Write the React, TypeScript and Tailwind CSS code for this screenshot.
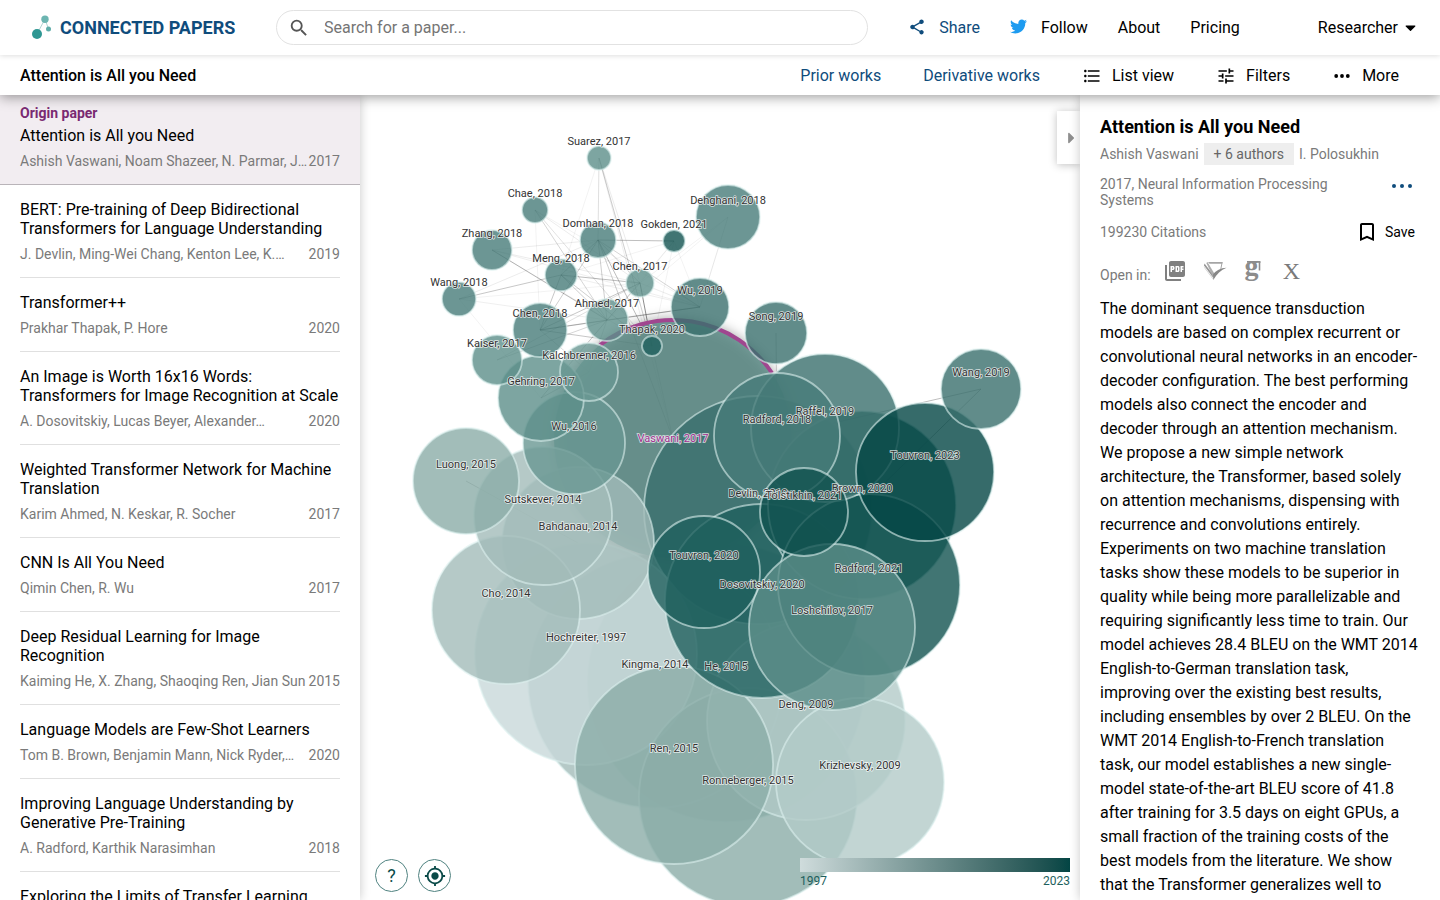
import React from "react";
import {
  MdShare,
  MdFormatListBulleted,
  MdTune,
  MdBookmarkBorder,
  MdPictureAsPdf,
  MdSearch,
  MdMyLocation,
} from "react-icons/md";
import { FaTwitter, FaCaretDown, FaCaretRight } from "react-icons/fa";

type Paper = { title: string; authors: string; year: number };

const papers: Paper[] = [
  {
    title: "BERT: Pre-training of Deep Bidirectional Transformers for Language Understanding",
    authors: "J. Devlin, Ming-Wei Chang, Kenton Lee, K.…",
    year: 2019,
  },
  { title: "Transformer++", authors: "Prakhar Thapak, P. Hore", year: 2020 },
  {
    title: "An Image is Worth 16x16 Words: Transformers for Image Recognition at Scale",
    authors: "A. Dosovitskiy, Lucas Beyer, Alexander…",
    year: 2020,
  },
  {
    title: "Weighted Transformer Network for Machine Translation",
    authors: "Karim Ahmed, N. Keskar, R. Socher",
    year: 2017,
  },
  { title: "CNN Is All You Need", authors: "Qimin Chen, R. Wu", year: 2017 },
  {
    title: "Deep Residual Learning for Image Recognition",
    authors: "Kaiming He, X. Zhang, Shaoqing Ren, Jian Sun",
    year: 2015,
  },
  {
    title: "Language Models are Few-Shot Learners",
    authors: "Tom B. Brown, Benjamin Mann, Nick Ryder,…",
    year: 2020,
  },
  {
    title: "Improving Language Understanding by Generative Pre-Training",
    authors: "A. Radford, Karthik Narasimhan",
    year: 2018,
  },
  {
    title: "Exploring the Limits of Transfer Learning with a Unified Text-to-Text Transformer",
    authors: "Colin Raffel, Noam Shazeer, Adam Roberts,…",
    year: 2019,
  },
];

const yearFill: Record<number, string> = {
  1997: "#c8d8d9",
  2009: "#b3cac8",
  2014: "#a2bcb9",
  2015: "#8baca8",
  2016: "#699792",
  2017: "#5c8e8a",
  2018: "#477c79",
  2019: "#396f6d",
  2020: "#1f605e",
  2021: "#125350",
  2023: "#044645",
};

type GraphNode = { name: string; year: number; x: number; y: number; r: number };

const nodes: Record<string, GraphNode> = {
  he: { name: "He", year: 2015, x: 726, y: 683, r: 139 },
  kingma: { name: "Kingma", year: 2014, x: 655, y: 681, r: 127 },
  vaswani: { name: "Vaswani", year: 2017, x: 673, y: 439, r: 119 },
  devlin: { name: "Devlin", year: 2019, x: 758, y: 510, r: 114 },
  hochreiter: { name: "Hochreiter", year: 1997, x: 586, y: 654, r: 111 },
  ronneberger: { name: "Ronneberger", year: 2015, x: 748, y: 797, r: 109 },
  deng: { name: "Deng", year: 2009, x: 806, y: 721, r: 99 },
  ren: { name: "Ren", year: 2015, x: 674, y: 765, r: 99 },
  dosovitskiy: { name: "Dosovitskiy", year: 2020, x: 762, y: 601, r: 97 },
  brown: { name: "Brown", year: 2020, x: 862, y: 505, r: 94 },
  radford21: { name: "Radford", year: 2021, x: 869, y: 585, r: 91 },
  krizhevsky: { name: "Krizhevsky", year: 2009, x: 860, y: 782, r: 84 },
  loshchilov: { name: "Loshchilov", year: 2017, x: 832, y: 627, r: 83 },
  bahdanau: { name: "Bahdanau", year: 2014, x: 578, y: 543, r: 76 },
  raffel: { name: "Raffel", year: 2019, x: 825, y: 428, r: 74 },
  cho: { name: "Cho", year: 2014, x: 506, y: 610, r: 74 },
  touvron23: { name: "Touvron", year: 2023, x: 925, y: 472, r: 69 },
  sutskever: { name: "Sutskever", year: 2014, x: 543, y: 516, r: 69 },
  radford18: { name: "Radford", year: 2018, x: 777, y: 436, r: 63 },
  touvron20: { name: "Touvron", year: 2020, x: 704, y: 572, r: 56 },
  luong: { name: "Luong", year: 2015, x: 466, y: 481, r: 53 },
  wu16: { name: "Wu", year: 2016, x: 574, y: 443, r: 51 },
  tolstikhin: { name: "Tolstikhin", year: 2021, x: 804, y: 512, r: 44 },
  gehring: { name: "Gehring", year: 2017, x: 541, y: 398, r: 43 },
  wang19: { name: "Wang", year: 2019, x: 981, y: 389, r: 40 },
  dehghani: { name: "Dehghani", year: 2018, x: 728, y: 217, r: 32 },
  song: { name: "Song", year: 2019, x: 776, y: 333, r: 31 },
  kalchbrenner: { name: "Kalchbrenner", year: 2016, x: 589, y: 372, r: 29 },
  wu19: { name: "Wu", year: 2019, x: 700, y: 307, r: 29 },
  chen18: { name: "Chen", year: 2018, x: 540, y: 330, r: 27 },
  kaiser: { name: "Kaiser", year: 2017, x: 497, y: 360, r: 25 },
  ahmed: { name: "Ahmed", year: 2017, x: 607, y: 320, r: 21 },
  zhang: { name: "Zhang", year: 2018, x: 492, y: 250, r: 20 },
  domhan: { name: "Domhan", year: 2018, x: 598, y: 240, r: 18 },
  wang18: { name: "Wang", year: 2018, x: 459, y: 299, r: 17 },
  meng: { name: "Meng", year: 2018, x: 561, y: 275, r: 16 },
  chae: { name: "Chae", year: 2018, x: 535, y: 210, r: 13 },
  chen17: { name: "Chen", year: 2017, x: 640, y: 283, r: 14 },
  suarez: { name: "Suarez", year: 2017, x: 599, y: 158, r: 12 },
  gokden: { name: "Gokden", year: 2021, x: 674, y: 241, r: 11 },
  thapak: { name: "Thapak", year: 2020, x: 652, y: 346, r: 10 },
};

const links: [string, string, number][] = [
  ["suarez", "domhan", 0.2],
  ["suarez", "thapak", 0.3],
  ["suarez", "meng", 0.08],
  ["suarez", "chen17", 0.12],
  ["suarez", "vaswani", 0.1],
  ["chae", "ahmed", 0.25],
  ["chae", "chen17", 0.12],
  ["chae", "thapak", 0.18],
  ["chae", "chen18", 0.08],
  ["chae", "wu19", 0.08],
  ["zhang", "ahmed", 0.4],
  ["zhang", "domhan", 0.12],
  ["zhang", "chen17", 0.12],
  ["zhang", "thapak", 0.12],
  ["zhang", "wu19", 0.1],
  ["wang18", "meng", 0.35],
  ["wang18", "ahmed", 0.1],
  ["wang18", "domhan", 0.12],
  ["wang18", "gehring", 0.08],
  ["wang18", "chen17", 0.08],
  ["domhan", "gokden", 0.4],
  ["domhan", "chen18", 0.3],
  ["domhan", "ahmed", 0.3],
  ["domhan", "chen17", 0.25],
  ["domhan", "thapak", 0.4],
  ["domhan", "vaswani", 0.3],
  ["domhan", "wu19", 0.25],
  ["domhan", "meng", 0.3],
  ["meng", "chen17", 0.4],
  ["meng", "ahmed", 0.3],
  ["meng", "thapak", 0.3],
  ["meng", "chen18", 0.35],
  ["meng", "gokden", 0.08],
  ["meng", "wu19", 0.1],
  ["chen17", "thapak", 0.7],
  ["chen17", "ahmed", 0.35],
  ["chen17", "chen18", 0.35],
  ["chen17", "wu19", 0.12],
  ["chen17", "gokden", 0.1],
  ["chen17", "dehghani", 0.08],
  ["gokden", "ahmed", 0.06],
  ["gokden", "thapak", 0.08],
  ["gokden", "wu19", 0.08],
  ["dehghani", "wu19", 0.15],
  ["dehghani", "ahmed", 0.08],
  ["chen18", "ahmed", 0.3],
  ["chen18", "wu19", 0.35],
  ["chen18", "thapak", 0.35],
  ["chen18", "kalchbrenner", 0.2],
  ["kaiser", "ahmed", 0.25],
  ["kaiser", "chen17", 0.2],
  ["gehring", "ahmed", 0.35],
  ["gehring", "kalchbrenner", 0.3],
  ["ahmed", "wu19", 0.35],
  ["ahmed", "kalchbrenner", 0.2],
  ["thapak", "vaswani", 0.2],
  ["song", "radford18", 0.3],
  ["wang19", "brown", 0.4],
  ["wang19", "radford18", 0.4],
  ["luong", "bahdanau", 0.45],
];

function Graph() {
  const all = Object.entries(nodes);
  return (
    <svg
      role="img"
      aria-label="Graph of connected papers"
      viewBox="360 95 720 805"
      preserveAspectRatio="xMidYMid meet"
      className="block h-full w-full"
    >
      <defs>
        <filter id="origin-shadow" x="-20%" y="-20%" width="140%" height="140%">
          <feGaussianBlur stdDeviation="7" />
        </filter>
      </defs>
      <g stroke="#333333" strokeWidth="0.8">
        {links.map(([a, b, strength]) => (
          <line
            key={a + b}
            x1={nodes[a].x}
            y1={nodes[a].y}
            x2={nodes[b].x}
            y2={nodes[b].y}
            strokeOpacity={strength}
          />
        ))}
      </g>
      {all.map(([id, n]) => {
        const origin = id === "vaswani";
        return (
          <g key={id}>
            {origin && (
              <circle cx={n.x} cy={n.y} r={n.r} fill="#000000" fillOpacity="0.45" filter="url(#origin-shadow)" />
            )}
            <circle
              cx={n.x}
              cy={n.y}
              r={n.r}
              fill={yearFill[n.year]}
              fillOpacity="0.8"
              stroke="#dcf0ee"
              strokeOpacity={origin ? 0 : 0.6}
              strokeWidth="1.8"
            />
            {origin && <path d="M600 345A119 119 0 0 1 772 373" fill="none" stroke="#a0468f" strokeWidth="4" />}
          </g>
        );
      })}
      <g
        textAnchor="middle"
        stroke="#ffffff"
        strokeOpacity="0.75"
        strokeWidth="1.6"
        paintOrder="stroke"
        className="font-['Roboto',sans-serif] text-[11px]"
      >
        {all.map(([id, n]) => (
          <text
            key={id}
            x={n.x}
            y={id === "vaswani" ? n.y + 3 : n.y - 13}
            fill={id === "vaswani" ? "#a03090" : "#333333"}
          >
            {n.name}, {n.year}
          </text>
        ))}
      </g>
    </svg>
  );
}

function Logo() {
  return (
    <svg viewBox="0 0 20 26" className="h-[26px] w-5" aria-hidden="true">
      <path d="M5 19 13 4M13 4l3.5 10" stroke="#9cc9c7" strokeWidth="0.8" fill="none" />
      <circle cx="13" cy="4.2" r="3.7" fill="#6cb5b1" />
      <circle cx="16.5" cy="14" r="2.5" fill="#5fada9" />
      <circle cx="5" cy="19" r="5" fill="#2f9793" />
    </svg>
  );
}

function DotsIcon() {
  return (
    <svg viewBox="0 0 20 20" className="size-5" fill="currentColor" aria-hidden="true">
      <circle cx="4.2" cy="10" r="1.9" />
      <circle cx="10" cy="10" r="1.9" />
      <circle cx="15.8" cy="10" r="1.9" />
    </svg>
  );
}

function ScholarIcon() {
  return (
    <svg viewBox="0 0 24 20" className="h-5 w-6" aria-hidden="true">
      <path d="M5 1h15l-1 1.800H6.500z" fill="#a5a5a5" />
      <path d="M.5 5 9.500 17 10.500 19 1.500 7z" fill="#b5b5b5" />
      <path d="M1.500 2.500 10 13.500 10.300 17 1 4.500z" fill="#969696" />
      <path d="M4.500 1 11 12l-.5 4.500L3.300 2z" fill="#adadad" />
      <path d="M10 13.200C13 9.800 17.500 7 23.500 6.800 18 9 13.500 13.500 10.300 19z" fill="#888888" />
      <path d="m19 2-1.200 6" stroke="#a5a5a5" fill="none" />
    </svg>
  );
}

function GoogleScholarIcon() {
  return (
    <svg viewBox="0 0 18 22" className="h-[22px] w-[18px]" aria-hidden="true">
      <text
        x="8.5"
        y="15"
        textAnchor="middle"
        fill="#8c8c8c"
        className="font-['Liberation_Serif',serif] text-[28px] font-bold"
      >
        g
      </text>
      <path d="M4 1h13.500v1.800H4z" fill="#8c8c8c" />
      <path d="M16.500 2v8.500" stroke="#8c8c8c" strokeWidth="1.600" />
    </svg>
  );
}

const navLink = "flex items-center whitespace-nowrap";

export default function App() {
  return (
    <div className="flex h-screen flex-col overflow-hidden bg-white font-['Roboto',sans-serif] text-base text-black">
      <header className="relative z-30 flex h-[55px] shrink-0 items-center bg-white pr-[21px] pl-8 shadow-[0_1px_5px_rgba(0,0,0,0.13)]">
        <a href="#home" className="flex w-[244px] shrink-0 items-center gap-2 text-lg font-bold text-[#0f4c7c]">
          <Logo />
          CONNECTED PAPERS
        </a>
        <form className="flex h-[35px] min-w-0 flex-1 items-center rounded-full border border-[#e2e2e2] pl-[11px]">
          <MdSearch className="size-[22px] shrink-0 text-[#555555]" aria-hidden="true" />
          <input
            type="search"
            aria-label="Search for a paper"
            placeholder="Search for a paper..."
            className="ml-[14px] min-w-0 flex-1 rounded-full bg-transparent outline-none placeholder:text-[#757575]"
          />
        </form>
        <nav className="ml-10 flex shrink-0 items-center gap-[30px]" aria-label="Main">
          <a href="#share" className={`${navLink} gap-[13px] text-[#0f4c7c]`}>
            <MdShare className="mb-[2px] size-[18px]" aria-hidden="true" />
            Share
          </a>
          <a href="#follow" className={`${navLink} gap-[14px]`}>
            <FaTwitter className="mb-[2px] size-[17px] text-[#1d9bf0]" aria-hidden="true" />
            Follow
          </a>
          <a href="#about">About</a>
          <a href="#pricing">Pricing</a>
        </nav>
        <button type="button" className="ml-[78px] flex shrink-0 items-center gap-1">
          Researcher
          <FaCaretDown className="size-[17px]" aria-hidden="true" />
        </button>
      </header>

      <div className="relative z-20 flex h-10 shrink-0 items-center justify-between bg-white pt-[2px] pr-[41px] pl-5 shadow-[0_2px_12px_rgba(0,0,0,0.4)]">
        <h1 className="font-medium">Attention is All you Need</h1>
        <nav className="flex items-center gap-[42px]" aria-label="Graph tools">
          <a href="#prior" className="text-[#0f4c7c]">Prior works</a>
          <a href="#derivative" className="text-[#0f4c7c]">Derivative works</a>
          <button type="button" className="flex items-center gap-[10px]">
            <MdFormatListBulleted className="size-5" aria-hidden="true" />
            List view
          </button>
          <button type="button" className="flex items-center gap-[10px]">
            <MdTune className="size-5" aria-hidden="true" />
            Filters
          </button>
          <button type="button" className="flex items-center gap-[10px]">
            <DotsIcon />
            More
          </button>
        </nav>
      </div>

      <div className="flex min-h-0 flex-1">
        <aside className="z-10 w-[360px] shrink-0 overflow-hidden bg-white shadow-[0_0_10px_rgba(0,0,0,0.22)]">
          <a href="#origin" className="block border-b border-[#b9b4b9] bg-[#f2edf1] px-5 pt-[10px] pb-[15px]">
            <p className="text-sm leading-4 font-bold text-[#7a2a72]">Origin paper</p>
            <h2 className="mt-[5px] leading-[19px]">Attention is All you Need</h2>
            <p className="mt-2 flex justify-between text-sm leading-4 text-[#7a7a7a]">
              <span className="whitespace-nowrap">Ashish Vaswani, Noam Shazeer, N. Parmar, J…</span>
              <span>2017</span>
            </p>
          </a>
          <ul className="px-5">
            {papers.map((p) => (
              <li key={p.title} className="border-b border-[#e0e0e0] py-[15px]">
                <a href="#paper" className="block">
                  <h2 className="leading-[19px]">{p.title}</h2>
                  <p className="mt-2 flex justify-between text-sm leading-4 text-[#7a7a7a]">
                    <span className="whitespace-nowrap">{p.authors}</span>
                    <span>{p.year}</span>
                  </p>
                </a>
              </li>
            ))}
          </ul>
        </aside>

        <main className="relative min-w-0 flex-1">
          <Graph />
          <div className="absolute bottom-2 left-[15px] flex gap-[10px]">
            <button
              type="button"
              aria-label="Help"
              className="flex size-[33px] items-center justify-center rounded-full border border-[#4f8280] bg-white text-lg text-[#0a4a48]"
            >
              ?
            </button>
            <button
              type="button"
              aria-label="Center graph"
              className="flex size-[33px] items-center justify-center rounded-full border border-[#4f8280] bg-white text-[#0a4a48]"
            >
              <MdMyLocation className="size-[22px]" aria-hidden="true" />
            </button>
          </div>
          <div className="absolute right-[10px] bottom-3 w-[270px] text-xs leading-[14px] text-[#1d5f5d]">
            <div className="h-[14px] bg-linear-to-r from-[#cfdcdc] to-[#034544]" />
            <div className="mt-[2px] flex justify-between">
              <span>1997</span>
              <span>2023</span>
            </div>
          </div>
          <button
            type="button"
            aria-label="Collapse details"
            className="absolute top-4 right-0 flex h-[53px] w-[23px] items-center justify-center bg-white pl-[6px] text-[#8f8f8f] shadow-[0_1px_8px_rgba(0,0,0,0.25)]"
          >
            <FaCaretRight className="size-[18px]" aria-hidden="true" />
          </button>
        </main>

        <aside className="z-10 w-[360px] shrink-0 overflow-hidden bg-white px-5 pt-[22px] shadow-[0_0_10px_rgba(0,0,0,0.22)]">
          <h2 className="text-lg leading-5 font-bold">Attention is All you Need</h2>
          <div className="mt-[6px] flex items-center gap-[5px] text-sm text-[#7a7a7a]">
            <a href="#vaswani">Ashish Vaswani</a>
            <button type="button" className="h-[22px] bg-[#eeeeee] px-[10px] leading-[22px] text-[#666666]">
              + 6 authors
            </button>
            <a href="#polosukhin">I. Polosukhin</a>
          </div>
          <div className="mt-[11px] flex justify-between text-sm leading-4 text-[#7a7a7a]">
            <p className="w-[240px]">2017, Neural Information Processing Systems</p>
            <button type="button" aria-label="More actions" className="flex h-5 items-center gap-1 pr-2">
              <span className="size-1 rounded-full bg-[#0f4c7c]" />
              <span className="size-1 rounded-full bg-[#0f4c7c]" />
              <span className="size-1 rounded-full bg-[#0f4c7c]" />
            </button>
          </div>
          <div className="mt-3 flex items-center justify-between text-sm text-[#7a7a7a]">
            <span>199230 Citations</span>
            <button type="button" className="flex items-center gap-[6px] pr-[5px] text-black">
              <MdBookmarkBorder className="size-6" aria-hidden="true" />
              Save
            </button>
          </div>
          <div className="mt-[13px] flex h-7 items-center text-sm text-[#7a7a7a]">
            <span className="mt-2">Open in:</span>
            <a href="#pdf" aria-label="PDF" className="ml-3">
              <MdPictureAsPdf className="size-6 text-[#808080]" aria-hidden="true" />
            </a>
            <a href="#semantic-scholar" aria-label="Semantic Scholar" className="ml-4">
              <ScholarIcon />
            </a>
            <a href="#google-scholar" aria-label="Google Scholar" className="ml-4">
              <GoogleScholarIcon />
            </a>
            <a href="#arxiv" aria-label="arXiv" className="ml-[22px] font-['Liberation_Serif',serif] text-2xl">
              X
            </a>
          </div>
          <p className="mt-3 leading-6">
            The dominant sequence transduction models are based on complex recurrent or convolutional neural networks in
            an encoder-decoder configuration. The best performing models also connect the encoder and decoder through an
            attention mechanism. We propose a new simple network architecture, the Transformer, based solely on
            attention mechanisms, dispensing with recurrence and convolutions entirely. Experiments on two machine
            translation tasks show these models to be superior in quality while being more parallelizable and requiring
            significantly less time to train. Our model achieves 28.4 BLEU on the WMT 2014 English-to-German translation
            task, improving over the existing best results, including ensembles by over 2 BLEU. On the WMT 2014
            English-to-French translation task, our model establishes a new single-model state-of-the-art BLEU score of
            41.8 after training for 3.5 days on eight GPUs, a small fraction of the training costs of the best models
            from the literature. We show that the Transformer generalizes well to other tasks by applying it
            successfully to English constituency parsing both with large and limited training data.
          </p>
        </aside>
      </div>
    </div>
  );
}
